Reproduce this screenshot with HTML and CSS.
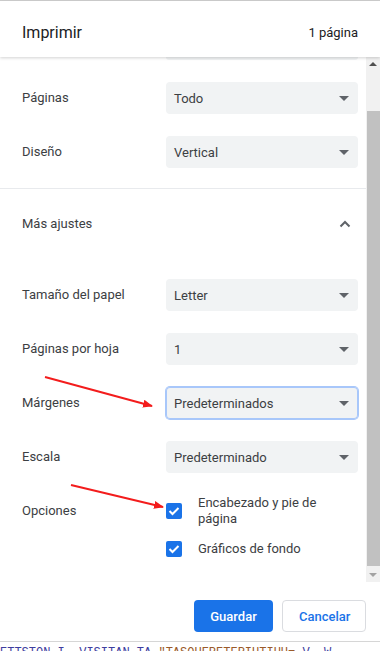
FILE: index.html
```html
<!DOCTYPE html>
<html lang="es">
<head>
  <meta charset="UTF-8">
  <meta name="viewport" content="width=device-width, initial-scale=1.0">
  <title>Imprimir</title>
  <link rel="stylesheet" href="styles.css">
</head>
<body>
  <div class="print-dialog">
    <header class="dialog-header">
      <h1>Imprimir</h1>
      <span class="page-count">1 página</span>
    </header>

    <div class="scroll-area">
      <div class="settings">
        <div class="row-stub"><div class="select-stub"></div></div>

        <div class="setting-row">
          <span class="setting-label">Páginas</span>
          <div class="select-box"><span>Todo</span><i class="caret"></i></div>
        </div>
        <div class="setting-row">
          <span class="setting-label">Diseño</span>
          <div class="select-box"><span>Vertical</span><i class="caret"></i></div>
        </div>

        <div class="divider"></div>

        <div class="setting-row more-row">
          <span class="setting-label">Más ajustes</span>
          <svg class="chevron" width="12" height="8" viewBox="0 0 12 8">
            <path d="M1.5 6.5 L6 2 L10.5 6.5" fill="none" stroke="#5f6368" stroke-width="2"/>
          </svg>
        </div>

        <div class="setting-row">
          <span class="setting-label">Tamaño del papel</span>
          <div class="select-box"><span>Letter</span><i class="caret"></i></div>
        </div>
        <div class="setting-row">
          <span class="setting-label">Páginas por hoja</span>
          <div class="select-box"><span>1</span><i class="caret"></i></div>
        </div>
        <div class="setting-row">
          <span class="setting-label">Márgenes</span>
          <div class="select-box focused"><span>Predeterminados</span><i class="caret"></i></div>
        </div>
        <div class="setting-row">
          <span class="setting-label">Escala</span>
          <div class="select-box"><span>Predeterminado</span><i class="caret"></i></div>
        </div>

        <div class="options-row">
          <span class="setting-label options-label">Opciones</span>
          <div class="options-list">
            <label class="check-item">
              <span class="checkbox">
                <svg width="12" height="10" viewBox="0 0 12 10"><path d="M1.5 5 L4.5 8 L10.5 2" fill="none" stroke="#fff" stroke-width="2"/></svg>
              </span>
              <span class="check-text">Encabezado y pie de página</span>
            </label>
            <label class="check-item">
              <span class="checkbox">
                <svg width="12" height="10" viewBox="0 0 12 10"><path d="M1.5 5 L4.5 8 L10.5 2" fill="none" stroke="#fff" stroke-width="2"/></svg>
              </span>
              <span class="check-text">Gráficos de fondo</span>
            </label>
          </div>
        </div>
      </div>

      <div class="scrollbar">
        <div class="scroll-btn"><i class="tri-up"></i></div>
        <div class="scroll-track"><div class="scroll-thumb"></div></div>
        <div class="scroll-btn"><i class="tri-down"></i></div>
      </div>
    </div>

    <footer class="dialog-footer">
      <button class="btn btn-primary">Guardar</button>
      <button class="btn btn-secondary">Cancelar</button>
    </footer>
  </div>

  <div class="page-behind">
    <span class="c-tag">ETTSTON I. VISITAN TA</span> <span class="c-str">"TASQUERETERIUTIUU=</span> <span class="c-tag">V. W</span>
  </div>

  <!-- red arrows drawn over the screenshot -->
  <svg class="annotations" width="380" height="651" viewBox="0 0 380 651">
    <defs>
      <marker id="head" markerWidth="10" markerHeight="8" refX="9" refY="4" orient="auto" markerUnits="userSpaceOnUse">
        <path d="M0 0 L10 4 L0 8 Z" fill="#f31c1c"/>
      </marker>
    </defs>
    <line x1="45" y1="377" x2="152" y2="406" stroke="#f31c1c" stroke-width="2" marker-end="url(#head)"/>
    <line x1="71" y1="485" x2="163" y2="507" stroke="#f31c1c" stroke-width="2" marker-end="url(#head)"/>
  </svg>
</body>
</html>
```

FILE: styles.css
```css
html, body {
  margin: 0;
  height: 651px;
  overflow: hidden;
  background-color: #ffffff;
  font-family: Roboto, "Liberation Sans", sans-serif;
}

.print-dialog {
  display: flex;
  flex-direction: column;
  height: 642px;
  border-top: 1px solid #cfcfcf;
  border-bottom: 1px solid #d6d6d6;
  box-sizing: border-box;
}

.dialog-header {
  position: relative;
  z-index: 2;
  display: flex;
  justify-content: space-between;
  align-items: center;
  height: 56px;
  padding: 6px 22px 0;
  box-sizing: border-box;
  background-color: #ffffff;
  box-shadow: 0 1px 3px rgba(0, 0, 0, 0.18);
}

.dialog-header h1 {
  margin: 0;
  font-size: 16px;
  font-weight: 400;
  color: #202124;
}

.page-count {
  font-size: 13px;
  color: #202124;
}

.scroll-area {
  display: flex;
  height: 525px;
  overflow: hidden;
}

.settings {
  flex: 1;
  overflow: hidden;
}

.row-stub {
  display: flex;
  padding-left: 166px;
  padding-right: 8px;
  margin-bottom: 11px;
}

.select-stub {
  flex: 1;
  height: 3px;
  background-color: #f1f3f4;
  border-radius: 0 0 4px 4px;
}

.setting-row {
  display: flex;
  align-items: center;
  height: 54px;
  padding: 0 8px 0 22px;
}

.setting-label {
  width: 144px;
  flex-shrink: 0;
  font-size: 13px;
  line-height: 16px;
  color: #3c4043;
}

.select-box {
  flex: 1;
  display: flex;
  justify-content: space-between;
  align-items: center;
  height: 32px;
  padding: 0 9px 0 8px;
  background-color: #f1f3f4;
  border-radius: 4px;
  font-size: 13px;
  color: #3c4043;
}

.select-box.focused {
  box-shadow: 0 0 0 1px #a8c7fa, inset 0 0 0 1px #a8c7fa;
}

.caret {
  width: 0;
  height: 0;
  border-left: 5px solid transparent;
  border-right: 5px solid transparent;
  border-top: 5px solid #5f6368;
}

.divider {
  margin-top: 9px;
  height: 1px;
  background-color: #e8eaed;
}

.more-row {
  justify-content: space-between;
  margin-top: 8px;
  margin-bottom: 17px;
  padding-right: 15px;
}

.options-row {
  display: flex;
  align-items: flex-start;
  padding: 11px 8px 0 22px;
}

.options-label {
  padding-top: 8px;
}

.options-list {
  display: flex;
  flex-direction: column;
  gap: 14px;
}

.check-item {
  display: flex;
  align-items: center;
  gap: 16px;
}

.checkbox {
  display: flex;
  justify-content: center;
  align-items: center;
  width: 16px;
  height: 16px;
  flex-shrink: 0;
  background-color: #1a73e8;
  border-radius: 2px;
}

.check-text {
  width: 160px;
  font-size: 13px;
  line-height: 16px;
  color: #3c4043;
}

.scrollbar {
  display: flex;
  flex-direction: column;
  width: 14px;
  background-color: #f1f1f1;
}

.scroll-btn {
  display: flex;
  justify-content: center;
  align-items: center;
  height: 14px;
}

.tri-up,
.tri-down {
  width: 0;
  height: 0;
  border-left: 4px solid transparent;
  border-right: 4px solid transparent;
}

.tri-up {
  border-bottom: 4px solid #505050;
}

.tri-down {
  border-top: 4px solid #a3a3a3;
}

.scroll-track {
  flex: 1;
  display: flex;
  flex-direction: column;
  padding: 40px 0 2px 1px;
}

.scroll-thumb {
  flex: 1;
  background-color: #c1c1c1;
}

.dialog-footer {
  display: flex;
  justify-content: flex-end;
  gap: 9px;
  padding: 18px 14px 0 0;
}

.btn {
  height: 32px;
  padding: 0 16px;
  border-radius: 4px;
  font-family: Roboto, "Liberation Sans", sans-serif;
  font-size: 13px;
  font-weight: 500;
  cursor: pointer;
}

.btn-primary {
  width: 79px;
  background-color: #1a73e8;
  border: none;
  color: #ffffff;
}

.btn-secondary {
  width: 84px;
  background-color: #ffffff;
  border: 1px solid #dadce0;
  color: #1a73e8;
}

.page-behind {
  padding-top: 4px;
  font-family: "Liberation Mono", monospace;
  font-size: 12px;
  line-height: 14px;
  white-space: nowrap;
}

.c-tag {
  color: #3d3d9e;
}

.c-str {
  color: #9a5a2a;
}

.annotations {
  position: absolute;
  top: 0;
  left: 0;
  pointer-events: none;
}
```
